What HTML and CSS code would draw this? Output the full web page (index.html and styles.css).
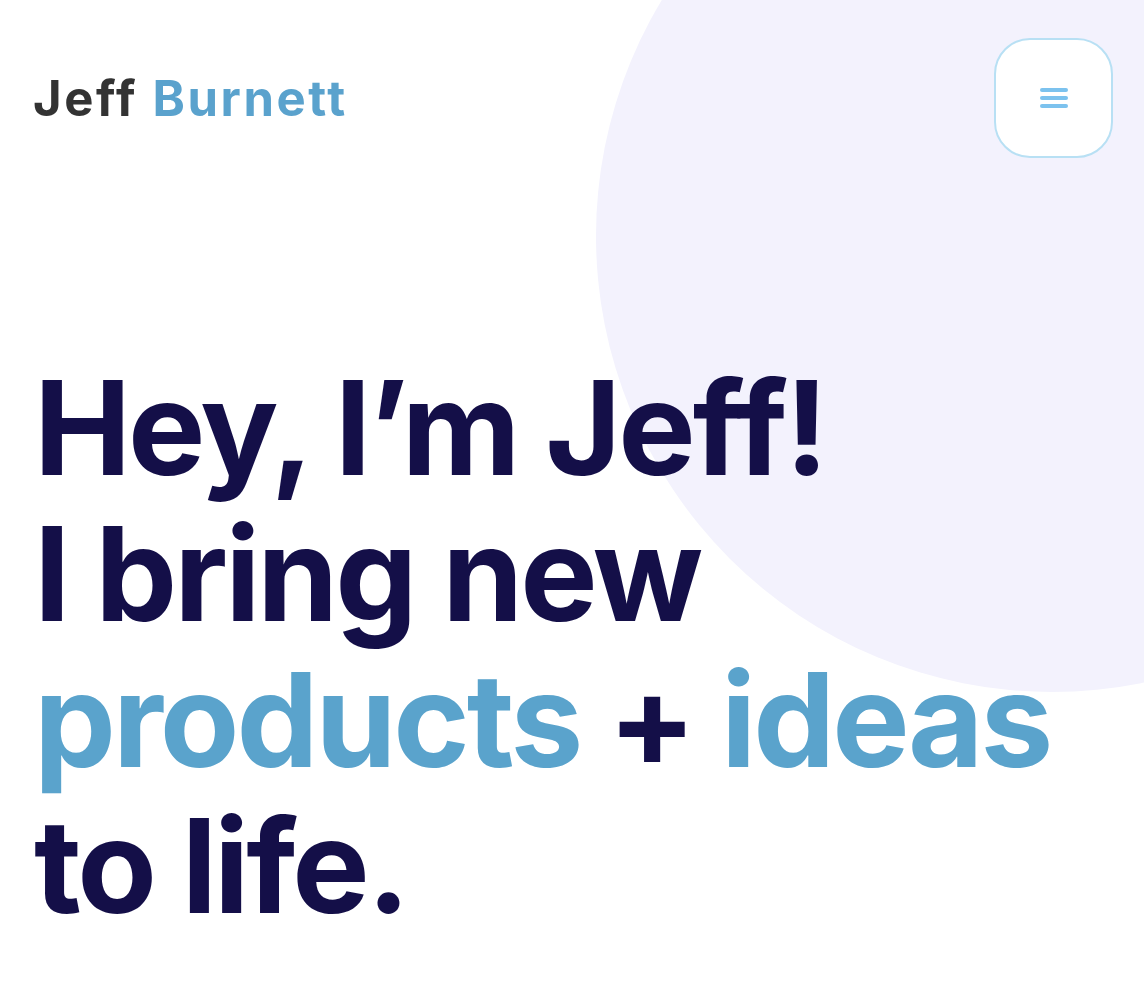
FILE: index.html
```html
<!DOCTYPE html>
<html lang="en">
<head>
<meta charset="utf-8">
<title>Jeff Burnett</title>
<link rel="stylesheet" href="styles.css">
</head>
<body>
<div class="page">
  <div class="blob"></div>
  <header class="header">
    <a class="logo" href="#"><span class="logo-first">Jeff</span> <span class="logo-last">Burnett</span></a>
    <button class="menu-btn" aria-label="Menu">
      <svg width="30" height="22" viewBox="0 0 30 22">
        <g stroke="#7cc2ee" stroke-width="4" stroke-linecap="round">
          <line x1="3" y1="3" x2="27" y2="3"/>
          <line x1="3" y1="11" x2="27" y2="11"/>
          <line x1="3" y1="19" x2="27" y2="19"/>
        </g>
      </svg>
    </button>
  </header>
  <main class="hero">
    <h1 class="headline">
      <span class="line">Hey, I’m Jeff!</span>
      <span class="line">I bring new</span>
      <span class="line"><span class="accent">products</span> + <span class="accent">ideas</span></span>
      <span class="line">to life.</span>
    </h1>
  </main>
</div>
</body>
</html>
```
FILE: styles.css
```css
html, body {
  margin: 0;
  padding: 0;
  background: #ffffff;
}
body {
  font-family: Inter, "Noto Sans", sans-serif;
}
.page {
  position: relative;
  width: 1144px;
  height: 1006px;
  overflow: hidden;
}
.blob {
  position: absolute;
  left: 596px;
  top: -220px;
  width: 912px;
  height: 912px;
  border-radius: 50%;
  background: #f3f2fd;
}
.header {
  position: relative;
  display: flex;
  justify-content: space-between;
  align-items: center;
  padding: 38px 31px 0 33px;
}
.logo {
  text-decoration: none;
  font-size: 49px;
  font-weight: 700;
  letter-spacing: 2.6px;
  line-height: 1;
}
.logo-first { color: #333333; }
.logo-last { color: #5aa2cd; }
.menu-btn {
  width: 119px;
  height: 120px;
  border: 2px solid #b8e0f4;
  border-radius: 36px;
  background: #ffffff;
  display: flex;
  align-items: center;
  justify-content: center;
  padding: 0;
}
.hero {
  position: relative;
  padding: 197px 0 0 34px;
}
.headline {
  margin: 0;
  color: #140f48;
  font-size: 130px;
  font-weight: 700;
  line-height: 146px;
  letter-spacing: -3px;
}
.line { display: block; }
.accent { color: #5aa3cc; }
```
